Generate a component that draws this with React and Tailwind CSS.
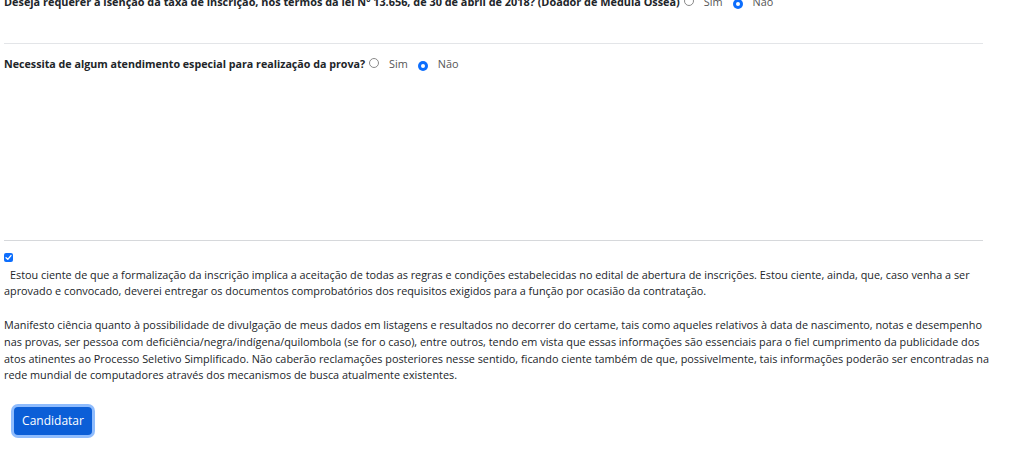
import React from "react";

function Radio({ checked }) {
  return checked ? (
    <span className="inline-flex items-center justify-center w-[10px] h-[10px] rounded-full bg-[#0d6efd] shrink-0">
      <span className="w-[4px] h-[4px] rounded-full bg-white" />
    </span>
  ) : (
    <span className="inline-block w-[10px] h-[10px] rounded-full border border-[#8a8a8a] bg-white shrink-0" />
  );
}

function Question({ text, className, textClass }) {
  return (
    <div className={"flex items-center whitespace-nowrap " + className}>
      <span className={"font-bold " + textClass}>{text}</span>
      <span className="ml-[4px]"><Radio /></span>
      <span className="ml-[10px] font-normal text-[#555]">Sim</span>
      <span className="ml-[10px]"><Radio checked /></span>
      <span className="ml-[10px] font-normal text-[#555]">Não</span>
    </div>
  );
}

export default function App() {
  return (
    <div className="w-[1024px] h-[461px] overflow-hidden bg-white font-['Open_Sans',sans-serif] text-[10.85px] leading-[16.8px] text-[#212529]">
      <div className="pl-[4px] w-[983px]">
        <Question
          className="-mt-[6px]"
          textClass="text-[10.88px]"
          text="Deseja requerer a isenção da taxa de inscrição, nos termos da lei Nº 13.656, de 30 de abril de 2018? (Doador de Medula Óssea)"
        />
        <div className="mt-[32px] h-px bg-[#e3e5e8]" />
        <Question
          className="mt-[12px]"
          textClass="text-[10.7px]"
          text="Necessita de algum atendimento especial para realização da prova?"
        />
        <div className="mt-[167px] h-px bg-[#d6d8db]" />
        <div className="mt-[12px] w-[9px] h-[9px] rounded-[2px] bg-[#0d6efd] flex items-center justify-center">
          <svg width="7" height="7" viewBox="0 0 8 8">
            <path d="M1.2 4.2 L3.2 6.1 L6.8 1.8" fill="none" stroke="white" strokeWidth="1.6" strokeLinecap="round" strokeLinejoin="round" />
          </svg>
        </div>
        <div className="mt-[5px] whitespace-nowrap">
          <span className="pl-[6px]">Estou ciente de que a formalização da inscrição implica a aceitação de todas as regras e condições estabelecidas no edital de abertura de inscrições. Estou ciente, ainda, que, caso venha a ser</span>
          <br />
          aprovado e convocado, deverei entregar os documentos comprobatórios dos requisitos exigidos para a função por ocasião da contratação.
          <br />
          <br />
          Manifesto ciência quanto à possibilidade de divulgação de meus dados em listagens e resultados no decorrer do certame, tais como aqueles relativos à data de nascimento, notas e desempenho
          <br />
          nas provas, ser pessoa com deficiência/negra/indígena/quilombola (se for o caso), entre outros, tendo em vista que essas informações são essenciais para o fiel cumprimento da publicidade dos
          <br />
          atos atinentes ao Processo Seletivo Simplificado. Não caberão reclamações posteriores nesse sentido, ficando ciente também de que, possivelmente, tais informações poderão ser encontradas na
          <br />
          rede mundial de computadores através dos mecanismos de busca atualmente existentes.
        </div>
        <button className="mt-[23px] ml-[10px] w-[78px] h-[28px] rounded-[4px] bg-[#0b5ed7] text-white text-[12px] leading-none ring-[3px] ring-[#8fbcfd] flex items-center justify-center">
          Candidatar
        </button>
      </div>
    </div>
  );
}
